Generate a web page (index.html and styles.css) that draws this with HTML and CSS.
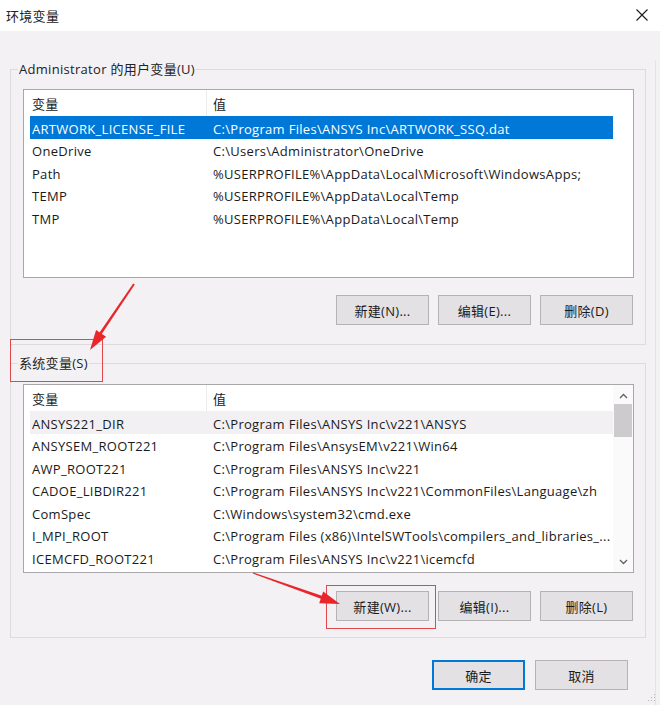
FILE: index.html
```html
<!DOCTYPE html>
<html lang="zh-CN">
<head>
<meta charset="utf-8">
<title>环境变量</title>
<link rel="stylesheet" href="styles.css">
</head>
<body>
<div class="window">
  <div class="titlebar">
    <span class="title">环境变量</span>
    <svg class="close" width="12" height="12" viewBox="0 0 12 12"><path d="M0.5 0.5 L11.5 11.5 M11.5 0.5 L0.5 11.5" stroke="#1a1a1a" stroke-width="1.1" fill="none"/></svg>
  </div>
  <div class="client">
    <fieldset class="group group-user">
      <legend>Administrator 的用户变量(U)</legend>
      <div class="list">
        <div class="list-main">
          <div class="list-head"><div class="hcell h1">变量</div><div class="hcell h2">值</div></div>
          <div class="rows">
            <div class="row selected"><span class="c1">ARTWORK_LICENSE_FILE</span><span class="c2">C:\Program Files\ANSYS Inc\ARTWORK_SSQ.dat</span></div>
            <div class="row"><span class="c1">OneDrive</span><span class="c2">C:\Users\Administrator\OneDrive</span></div>
            <div class="row"><span class="c1">Path</span><span class="c2">%USERPROFILE%\AppData\Local\Microsoft\WindowsApps;</span></div>
            <div class="row"><span class="c1">TEMP</span><span class="c2">%USERPROFILE%\AppData\Local\Temp</span></div>
            <div class="row"><span class="c1">TMP</span><span class="c2">%USERPROFILE%\AppData\Local\Temp</span></div>
          </div>
        </div>
        <div class="scroll-space"></div>
      </div>
      <div class="btn-row">
        <button class="btn">新建(N)...</button>
        <button class="btn">编辑(E)...</button>
        <button class="btn">删除(D)</button>
      </div>
    </fieldset>

    <fieldset class="group group-system">
      <legend>系统变量(S)</legend>
      <div class="list">
        <div class="list-main">
          <div class="list-head"><div class="hcell h1">变量</div><div class="hcell h2">值</div></div>
          <div class="rows">
            <div class="row hover"><span class="c1">ANSYS221_DIR</span><span class="c2">C:\Program Files\ANSYS Inc\v221\ANSYS</span></div>
            <div class="row"><span class="c1">ANSYSEM_ROOT221</span><span class="c2">C:\Program Files\AnsysEM\v221\Win64</span></div>
            <div class="row"><span class="c1">AWP_ROOT221</span><span class="c2">C:\Program Files\ANSYS Inc\v221</span></div>
            <div class="row"><span class="c1">CADOE_LIBDIR221</span><span class="c2">C:\Program Files\ANSYS Inc\v221\CommonFiles\Language\zh</span></div>
            <div class="row"><span class="c1">ComSpec</span><span class="c2">C:\Windows\system32\cmd.exe</span></div>
            <div class="row"><span class="c1">I_MPI_ROOT</span><span class="c2">C:\Program Files (x86)\IntelSWTools\compilers_and_libraries_...</span></div>
            <div class="row"><span class="c1">ICEMCFD_ROOT221</span><span class="c2">C:\Program Files\ANSYS Inc\v221\icemcfd</span></div>
          </div>
        </div>
        <div class="scrollbar">
          <svg class="arrow-up" width="9" height="6" viewBox="0 0 9 6"><path d="M1 5 L4.5 1.5 L8 5" stroke="#606060" stroke-width="1.3" fill="none"/></svg>
          <div class="track"><div class="thumb"></div></div>
          <svg class="arrow-down" width="9" height="6" viewBox="0 0 9 6"><path d="M1 1 L4.5 4.5 L8 1" stroke="#606060" stroke-width="1.3" fill="none"/></svg>
        </div>
      </div>
      <div class="btn-row">
        <button class="btn">新建(W)...</button>
        <button class="btn">编辑(I)...</button>
        <button class="btn">删除(L)</button>
      </div>
    </fieldset>

    <div class="dialog-buttons">
      <button class="btn default">确定</button>
      <button class="btn">取消</button>
    </div>
  </div>
  <svg class="grip" width="10" height="10" viewBox="0 0 10 10">
    <rect x="8" y="2" width="1" height="1" fill="#b8b5b9"/>
    <rect x="5" y="5" width="1" height="1" fill="#b8b5b9"/>
    <rect x="8" y="5" width="1" height="1" fill="#b8b5b9"/>
    <rect x="2" y="8" width="1" height="1" fill="#b8b5b9"/>
    <rect x="5" y="8" width="1" height="1" fill="#b8b5b9"/>
    <rect x="8" y="8" width="1" height="1" fill="#b8b5b9"/>
  </svg>
</div>

<svg class="annotations" width="660" height="705" viewBox="0 0 660 705">
  <rect x="10.5" y="339.5" width="92" height="42" fill="none" stroke="#e2474b" stroke-width="1"/>
  <rect x="326.5" y="585.5" width="109" height="43" fill="none" stroke="#e2474b" stroke-width="1"/>
  <polygon points="133.2,283.6 134.8,284.6 101.6,334.2 99.4,332.8" fill="#e8262b"/>
  <polygon points="90,350 106.1,336.7 96.1,330.1" fill="#e8262b"/>
  <polygon points="253.2,572.4 252.8,573.6 321.6,599.0 322.6,596.0" fill="#e8262b"/>
  <polygon points="340,604 323.2,591.4 319.2,603.2" fill="#e8262b"/>
</svg>
</body>
</html>
```

FILE: styles.css
```css
* { box-sizing: border-box; }

html, body {
  margin: 0;
  padding: 0;
}

body {
  width: 660px;
  height: 705px;
  overflow: hidden;
  background: #f3f1f4;
  font-family: "Open Sans", "Noto Sans CJK SC", sans-serif;
  font-size: 13px;
  letter-spacing: 0.3px;
  color: #1a1a1a;
  position: relative;
}

.window {
  width: 660px;
  height: 705px;
  position: relative;
}

.titlebar {
  height: 31px;
  background: #ffffff;
  display: flex;
  align-items: center;
  justify-content: space-between;
  padding: 0 12px 0 6px;
}

.title {
  font-size: 13px;
  line-height: 18px;
  color: #222;
}

.close {
  display: block;
  margin-bottom: 1px;
}

.client {
  padding: 0 9px 0 10px;
  border-right: 1px solid #e6e3e7;
  width: 656px;
  height: 674px;
}

.group {
  margin: 0;
  padding: 0 0 0 12px;
  border: 1px solid #dedbdf;
  min-width: 0;
}

.group legend {
  margin-left: -5px;
  padding: 0 1px;
  line-height: 18px;
  font-size: 13px;
  color: #222;
}

.group-user {
  margin-top: 29px;
  padding-bottom: 19px;
}

.group-system {
  margin-top: 9px;
  padding-bottom: 16px;
}

.list {
  width: 611px;
  height: 189px;
  border: 1px solid #a9a7aa;
  background: #ffffff;
  display: flex;
}

.group-user .list { margin-top: 11px; }
.group-system .list { margin-top: 12px; }

.list-main {
  width: 589px;
  display: flex;
  flex-direction: column;
  overflow: hidden;
}

.list-head {
  height: 26px;
  display: flex;
  flex: none;
}

.hcell {
  line-height: 23px;
  padding-top: 3px;
  white-space: nowrap;
}

.h1 {
  width: 183px;
  padding-left: 8px;
  border-right: 1px solid #ebebeb;
}

.h2 {
  flex: 1;
  padding-left: 6px;
}

.rows {
  margin-left: 6px;
  display: flex;
  flex-direction: column;
}

.row {
  height: 22.5px;
  padding-top: 3px;
  display: grid;
  grid-template-columns: 183px 1fr;
  align-items: center;
  white-space: nowrap;
  overflow: hidden;
}

.row .c1 { padding-left: 2px; }
.row .c2 { overflow: hidden; }

.row.selected {
  background: #0078d7;
  color: #ffffff;
}

.row.hover {
  background: #f2f0f2;
}

.scroll-space {
  flex: 1;
}

.scrollbar {
  flex: 1;
  display: flex;
  flex-direction: column;
  align-items: center;
  background: #fafafa;
  padding: 8px 0 7px;
}

.scrollbar .track {
  flex: 1;
  width: 100%;
  padding: 5px 1px 0 1px;
}

.thumb {
  height: 33px;
  background: #cdcbce;
}

.btn-row {
  display: flex;
  justify-content: flex-end;
  gap: 9px;
  width: 611px;
  padding-right: 1px;
}

.group-user .btn-row { margin-top: 17px; }
.group-system .btn-row { margin-top: 18px; }

.btn {
  width: 93px;
  height: 30px;
  margin: 0;
  padding: 0;
  background: #e3e1e4;
  border: 1px solid #b4b2b5;
  font-family: "Open Sans", "Noto Sans CJK SC", sans-serif;
  font-size: 13px;
  letter-spacing: 0.3px;
  color: #1a1a1a;
}

.btn.default {
  border: 2px solid #0078d7;
}

.dialog-buttons {
  display: flex;
  justify-content: flex-end;
  gap: 10px;
  margin-top: 22px;
  padding-right: 18px;
}

.grip {
  position: absolute;
  right: 4px;
  bottom: 3px;
}

.annotations {
  position: absolute;
  left: 0;
  top: 0;
  pointer-events: none;
}
```
